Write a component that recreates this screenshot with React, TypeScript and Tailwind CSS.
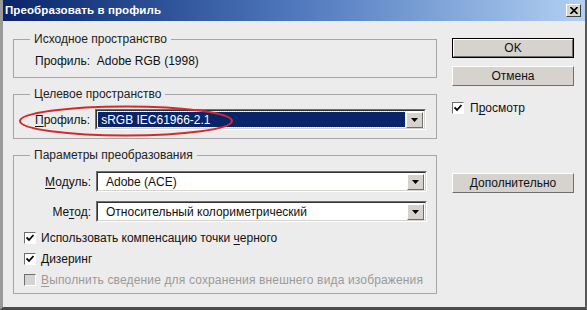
import { ReactNode } from "react";

const font = "[font-family:'Liberation_Sans',Arial,sans-serif]";

const Btn = ({ label, isDefault = false }: { label: string; isDefault?: boolean }) => (
  <div className={`w-[122px] h-[20px] ${isDefault ? "border border-black" : ""}`}>
    <div className="h-full flex items-center justify-center bg-[#d6d3ce] border border-t-white border-l-white border-r-[#6e6e6e] border-b-[#6e6e6e] text-[12px] text-[#111]">
      {label}
    </div>
  </div>
);

const Arrow = () => (
  <div className="w-[17px] h-[16px] flex items-center justify-center bg-[#d6d3ce] border border-t-white border-l-white border-r-[#6e6e6e] border-b-[#6e6e6e]">
    <svg width="7" height="4" viewBox="0 0 7 4">
      <polygon points="0,0 7,0 3.5,4" fill="#000" />
    </svg>
  </div>
);

const Select = ({ value, selected = false }: { value: string; selected?: boolean }) => (
  <div className="w-[331px] h-[21px] flex items-center border border-t-[#6e6e6e] border-l-[#6e6e6e] border-r-white border-b-white bg-white">
    <div className="flex-1 h-full flex items-center border border-t-[#333] border-l-[#333] border-r-[#d6d3ce] border-b-[#d6d3ce] pr-px">
      {selected ? (
        <div className="flex-1 h-[15px] mx-px flex items-center bg-[#0a246a] text-white outline outline-1 outline-dotted outline-[#e0e0e0] pl-[3px]">
          {value}
        </div>
      ) : (
        <div className="flex-1 pl-[8px] text-[#111]">{value}</div>
      )}
      <Arrow />
    </div>
  </div>
);

const Check = ({ checked = true, disabled = false }: { checked?: boolean; disabled?: boolean }) => (
  <span
    className={`w-[12px] h-[12px] flex items-center justify-center border border-t-[#6e6e6e] border-l-[#6e6e6e] border-r-white border-b-white ${
      disabled ? "bg-[#d4d4d4]" : "bg-white"
    }`}
  >
    {checked && (
      <svg width="8" height="8" viewBox="0 0 8 8">
        <path d="M0.5 3.5 L3 6 L7.5 1" stroke="#000" strokeWidth="1.8" fill="none" />
      </svg>
    )}
  </span>
);

const Group = ({ title, className, children }: { title: string; className: string; children: ReactNode }) => (
  <fieldset className={`border border-[#a6a6a6] px-0 pb-0 ${className}`}>
    <legend className="ml-[16px] px-[4px] leading-[15px] text-[#222]">{title}</legend>
    {children}
  </fieldset>
);

const U = ({ children }: { children: ReactNode }) => <span className="underline underline-offset-2">{children}</span>;

export default function App() {
  return (
    <div className={`w-[587px] h-[310px] ${font} text-[12px] bg-[#ececec] border-l-[3px] border-l-[#9a9a9a] border-r-2 border-r-[#5a5a5a] border-b-[3px] border-b-[#4a4a4a] flex flex-col`}>
      {/* title bar */}
      <div className="h-[21px] flex items-center justify-between bg-gradient-to-r from-[#0a246a] via-[#4f78bd] to-[#b2d0f2] pl-[2px] pr-[4px]">
        <span className="text-white font-bold text-[11.5px] tracking-[0.1px]">Преобразовать в профиль</span>
        <div className="w-[15px] h-[13px] flex items-center justify-center bg-[#d6d3ce] border border-t-white border-l-white border-r-[#404040] border-b-[#404040]">
          <svg width="8" height="7" viewBox="0 0 8 7">
            <path d="M0.5 0 L7.5 7 M7.5 0 L0.5 7" stroke="#000" strokeWidth="1.6" />
          </svg>
        </div>
      </div>

      <div className="flex flex-1">
        {/* left column */}
        <div className="w-[424px] ml-[10px] flex flex-col">
          <Group title="Исходное пространство" className="mt-[11px] h-[46px] pt-[7px]">
            <div className="pl-[21px] leading-[15px] text-[#111]">Профиль:&nbsp;&nbsp;Adobe RGB (1998)</div>
          </Group>

          <Group title="Целевое пространство" className="relative mt-[9px] h-[52px] pt-[7px]">
            <div className="pl-[21px] flex items-center gap-[5px]">
              <span className="text-[#111]">
                <U>П</U>рофиль:
              </span>
              <Select value="sRGB IEC61966-2.1" selected />
            </div>
            <svg className="absolute left-[3px] top-[2px]" width="218" height="34" viewBox="0 0 218 34">
              <ellipse cx="109" cy="17" rx="106" ry="14.5" fill="none" stroke="#d42a2a" strokeWidth="2" />
            </svg>
          </Group>

          <Group title="Параметры преобразования" className="mt-[9px] h-[146px] pt-[8px]">
            <div className="flex flex-col gap-[9px] items-end pr-[9px]">
              <div className="flex items-center gap-[5px]">
                <span className="text-[#111]">
                  <U>М</U>одуль:
                </span>
                <Select value="Adobe (ACE)" />
              </div>
              <div className="flex items-center gap-[5px]">
                <span className="text-[#111]">
                  Ме<U>т</U>од:
                </span>
                <Select value="Относительный колориметрический" />
              </div>
            </div>
            <div className="flex flex-col pl-[10px] mt-[5px]">
              <div className="h-[21px] flex items-center gap-[5px] text-[#111]">
                <Check />
                <span>
                  Использовать компенсацию точки <U>ч</U>ерного
                </span>
              </div>
              <div className="h-[21px] flex items-center gap-[5px] text-[#111]">
                <Check />
                <span>
                  <U>Д</U>изеринг
                </span>
              </div>
              <div className="h-[22px] flex items-center gap-[5px] text-[#9a9a9a]">
                <Check checked={false} disabled />
                <span className="tracking-[0.15px]">
                  <U>В</U>ыполнить сведение для сохранения внешнего вида изображения
                </span>
              </div>
            </div>
          </Group>
        </div>

        {/* right column */}
        <div className="ml-[15px] flex flex-col pt-[17px]">
          <Btn label="OK" isDefault />
          <div className="mt-[8px]">
            <Btn label="Отмена" />
          </div>
          <div className="mt-[13px] flex items-center gap-[6px] text-[#111]">
            <Check />
            <span>
              П<U>р</U>осмотр
            </span>
          </div>
          <div className="mt-[56px]">
            <Btn label="Дополнительно" />
          </div>
        </div>
      </div>
    </div>
  );
}
